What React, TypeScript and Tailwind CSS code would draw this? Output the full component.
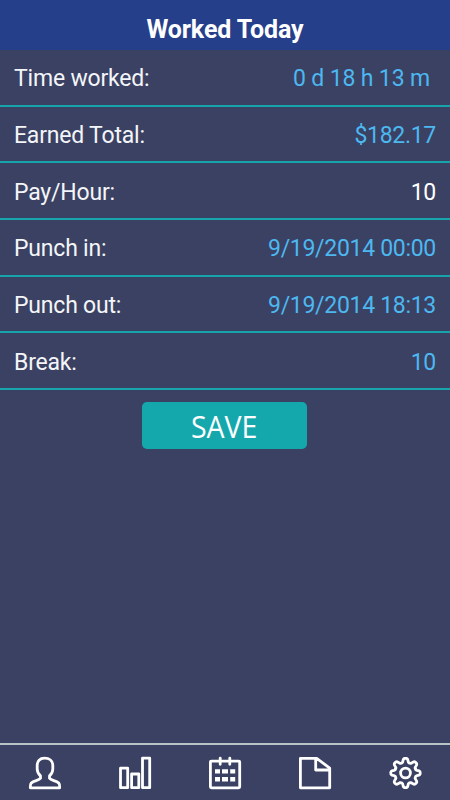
import type { ReactNode } from "react";

interface Row {
  label: string;
  value: string;
  valueClass: string;
}

const rows: Row[] = [
  { label: "Time worked:", value: "0 d 18 h 13 m", valueClass: "text-[#4db8f0] mr-[6px] tracking-[-0.15px]" },
  { label: "Earned Total:", value: "$182.17", valueClass: "text-[#4db8f0] tracking-[-0.3px]" },
  { label: "Pay/Hour:", value: "10", valueClass: "text-white tracking-[-0.3px]" },
  { label: "Punch in:", value: "9/19/2014 00:00", valueClass: "text-[#4db8f0] tracking-[-0.3px]" },
  { label: "Punch out:", value: "9/19/2014 18:13", valueClass: "text-[#4db8f0] tracking-[-0.3px]" },
  { label: "Break:", value: "10", valueClass: "text-[#4db8f0] tracking-[-0.3px]" },
];

function TabIcon({ children }: { children: ReactNode }) {
  return (
    <svg
      viewBox="0 0 36 36"
      className="size-9"
      fill="none"
      stroke="white"
      strokeWidth="2.8"
      strokeLinejoin="round"
      strokeLinecap="round"
    >
      {children}
    </svg>
  );
}

function PersonIcon() {
  return (
    <TabIcon>
      <path d="M17.500 3.200c-4.800 0-7.300 2.800-7.300 7.300v3.500c0 3 1.300 5.200 3.300 6.900v2.400c-1.500 2.200-6.600 2.300-9.300 4.800-.9.900-.9 2.400-.9 4.700h29.400c0-2.300 0-3.800-.9-4.700-2.700-2.500-7.800-2.600-9.300-4.800v-2.400c2-1.700 3.300-3.900 3.300-6.900v-3.500c0-4.500-3.500-7.300-8.300-7.300z" />
    </TabIcon>
  );
}

function ChartIcon() {
  return (
    <TabIcon>
      <path d="M3.500 13.200h7.200v19.500H3.500zM14.600 19h7.200v13.700h-7.200zM25.500 3.100h7.200v29.600h-7.200z" />
    </TabIcon>
  );
}

function CalendarIcon() {
  return (
    <TabIcon>
      <rect x="3.400" y="6.100" width="29.300" height="26.700" rx="1" />
      <path d="M13.200 3.100v6.200M22.800 3.100v6.200" />
      <path
        d="M8 14.200h5v4.400H8zM15 14.200h6v4.400h-6zM23.200 14.200h5v4.400h-5zM8 22.100h5v4.400H8zM15 22.100h6v4.400h-6zM23.200 22.100h5v4.400h-5z"
        fill="white"
        stroke="none"
      />
    </TabIcon>
  );
}

function DocumentIcon() {
  return (
    <TabIcon>
      <path d="M3.400 3.300h16.300l13 9.800v19.700H3.400zM18.700 3.300v11.700h14" />
    </TabIcon>
  );
}

// Outline of eight rounded teeth, sampled around the hub
const gearPoints = Array.from({ length: 160 }, (_, i) => {
  const angle = (i / 160) * Math.PI * 2;
  const radius = 12.7 + 2.1 * Math.tanh(1.8 * Math.cos(angle * 8));
  return `${(18.5 + radius * Math.cos(angle)).toFixed(2)},${(18 + radius * Math.sin(angle)).toFixed(2)}`;
}).join(" ");

function GearIcon() {
  return (
    <TabIcon>
      <polygon points={gearPoints} />
      <circle cx="18.500" cy="18" r="4.900" />
    </TabIcon>
  );
}

export default function App() {
  return (
    <div className="flex h-[800px] w-[450px] flex-col overflow-hidden bg-[#3a4163] font-['Roboto',sans-serif]">
      <header className="flex h-[50px] shrink-0 items-center justify-center bg-[#263f8a] pt-[8px]">
        <h1 className="text-[25px] leading-none font-bold tracking-[-0.1px] text-white">Worked Today</h1>
      </header>

      <dl className="flex flex-col">
        {rows.map((row) => (
          <div
            key={row.label}
            className="flex h-[56.670px] items-center justify-between border-b-2 border-[#17a4aa] px-[14px] pt-[3px] text-[23px] leading-none"
          >
            <dt className="tracking-[-0.2px] text-[#f4f5f8]">{row.label}</dt>
            <dd className={row.valueClass}>{row.value}</dd>
          </div>
        ))}
      </dl>

      <main className="flex flex-1 flex-col items-center pt-[12px] pr-[1px]">
        <button className="flex h-[47px] w-[165px] items-center justify-center rounded-[5px] bg-[#14a8ad] font-['Open_Sans',sans-serif] text-[31px] leading-none text-white">
          <span className="scale-x-[0.920] pt-[3px]">SAVE</span>
        </button>
      </main>

      <nav className="flex h-[57px] shrink-0 items-center justify-around border-t-2 border-[#b9c2c6] pt-px">
        <PersonIcon />
        <ChartIcon />
        <CalendarIcon />
        <DocumentIcon />
        <GearIcon />
      </nav>
    </div>
  );
}
